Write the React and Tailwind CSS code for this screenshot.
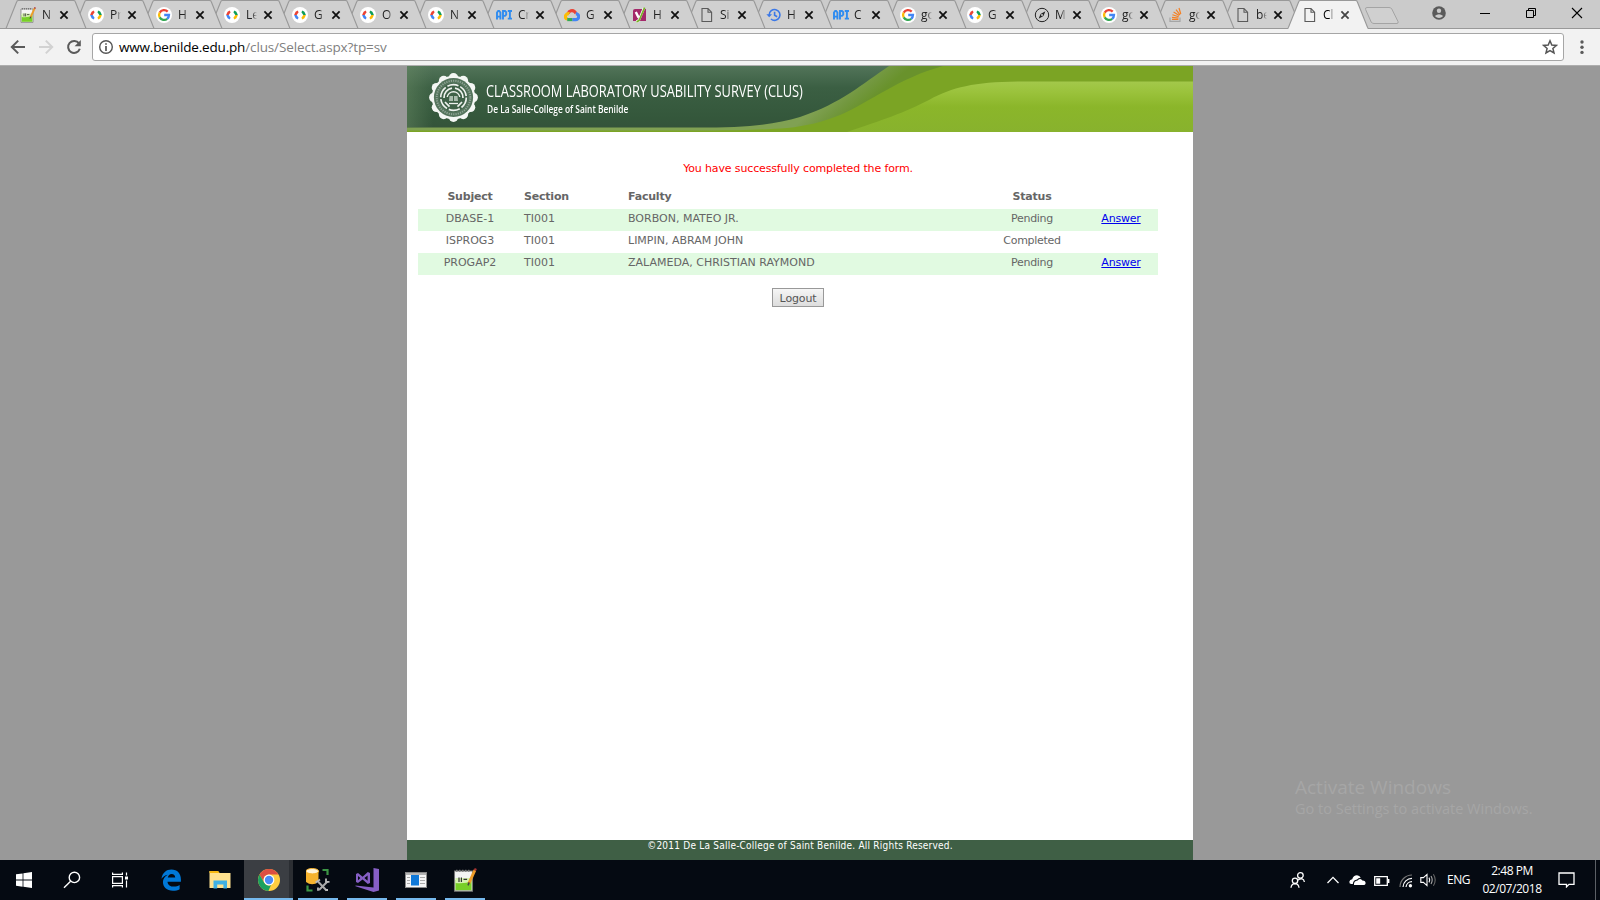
import React from "react";

const CodeIcon = () => (
  <svg viewBox="0 0 16 16" className="h-4 w-4">
    <circle cx="8" cy="8" r="8" fill="#fff" />
    <path d="M5.6 3.6 L6.6 5.2 L4.7 8 H2.1 L3.6 4.8Z" fill="#ea4335" />
    <path d="M2.1 8 H4.7 L6.6 10.8 L5.6 12.4 L3.6 11.2Z" fill="#4285f4" />
    <path d="M10.4 3.6 L9.4 5.2 L11.3 8 H13.9 L12.4 4.8Z" fill="#0f9d58" />
    <path d="M13.9 8 H11.3 L9.4 10.8 L10.4 12.4 L12.4 11.2Z" fill="#fbbc05" />
  </svg>
);

const GoogleIcon = () => (
  <svg viewBox="0 0 16 16" className="h-4 w-4">
    <circle cx="8" cy="8" r="8" fill="#fff" />
    <g fill="none" strokeWidth="2.3">
      <path d="M11.7 4.6 A5 5 0 0 0 3.7 5.6" stroke="#ea4335" />
      <path d="M3.7 5.6 A5 5 0 0 0 3.7 10.4" stroke="#fbbc05" />
      <path d="M3.7 10.4 A5 5 0 0 0 11.2 11.8" stroke="#34a853" />
      <path d="M11.2 11.8 A5 5 0 0 0 13 8 H8.2" stroke="#4285f4" />
    </g>
  </svg>
);

const ApiIcon = () => (
  <svg viewBox="0 0 16 16" className="h-4 w-4" fill="none" stroke="#2f8cf0" strokeWidth="1.9">
    <path d="M1 12.5 V5.5 L2.2 4 H3.2 L4.4 5.5 V12.5 M1 9.6 H4.4 M7 12.5 V4 H9 L10.2 5.2 V7.6 L9 8.9 H7 M11.8 4 H16 M11.8 11.6 H16 M13.9 4 V11.6" />
  </svg>
);

const CloudIcon = () => (
  <svg viewBox="0 0 16 16" className="h-4 w-4" fill="none" strokeWidth="3.1">
    <path d="M4.2 6.4 A4 4 0 0 1 10.6 4.6 L12 6.2" stroke="#ea4335" />
    <path d="M5.4 6.8 A3 3 0 0 0 2 11.4 L3.4 12" stroke="#fbbc05" />
    <path d="M3.2 12.6 H8.6" stroke="#34a853" />
    <path d="M8.4 12.6 H11.6 A2.8 2.8 0 0 0 11.8 6.6" stroke="#4285f4" />
  </svg>
);

const YoastIcon = () => (
  <svg viewBox="0 0 16 16" className="h-4 w-4">
    <path d="M3 2 H10 L14 2 V14 H1 V4 Q1 2 3 2Z" fill="#a4286a" />
    <path d="M3.8 5 L6.6 10.6 M12 1 L7.4 12 Q6.6 14.4 4 14.4" fill="none" stroke="#fff" strokeWidth="2.4" />
    <path d="M12.6 0.6 L7.8 12 Q6.8 14.6 4.4 14.6" fill="none" stroke="#77b227" strokeWidth="1.7" />
  </svg>
);

const FileIcon = () => (
  <svg viewBox="0 0 16 16" className="h-4 w-4" fill="none" stroke="#5a5a5a" strokeWidth="1.1">
    <path d="M3 1.5 H9 L12.6 5.2 V14.5 H3 Z M9 1.5 V5.2 H12.6" />
  </svg>
);

const HistoryIcon = () => (
  <svg viewBox="0 0 16 16" className="h-4 w-4" fill="none" stroke="#3b78e7" strokeWidth="1.6">
    <path d="M3.2 8 A5.4 5.4 0 1 1 5 12 M8.6 4.8 V8.3 L11.2 9.8" />
    <path d="M0.4 7.2 H6 L3.2 10.2Z" fill="#3b78e7" stroke="none" />
  </svg>
);

const CompassIcon = () => (
  <svg viewBox="0 0 16 16" className="h-4 w-4" fill="none" stroke="#222" strokeWidth="1">
    <circle cx="8" cy="8" r="6.7" />
    <path d="M11.4 4.2 L9.4 9 L4.6 11.8 L6.6 7Z" fill="#222" stroke="none" />
    <circle cx="8" cy="8" r="1" fill="#ccc" stroke="none" />
  </svg>
);

const StackIcon = () => (
  <svg viewBox="0 0 16 16" className="h-4 w-4" fill="none">
    <path d="M2 10.5 V14.4 H12 V10.5" stroke="#a5a5a5" strokeWidth="1.2" />
    <path d="M4 12.4 H10.4 M4 10.4 L10.5 11 M4.4 7.8 L10.7 9.7 M5.6 5 L11.2 8.5 M8 2.6 L12 7.8 M11 1 L12.8 7" stroke="#f48024" strokeWidth="1.2" />
  </svg>
);

const NotepadIcon = ({ className = "h-4 w-4" }) => (
  <svg viewBox="0 0 16 16" className={className}>
    <path d="M1 2 H13 V15.4 H1Z" fill="#f4f4f4" stroke="#777" strokeWidth="0.7" />
    <path d="M1.6 8 H12.4 V14.8 H1.6Z" fill="#78cf28" />
    <path d="M1.6 8 V10 Q8 10.8 12.4 8.6 V6.6 H1.6Z" fill="#d6f2b0" />
    <path d="M2 1.8 H12" stroke="#777" strokeWidth="1.4" strokeDasharray="1 1" />
    <path d="M4 6.4 V9.4 M5.6 6.4 V9.4 M7 7.6 H9.4" stroke="#333" strokeWidth="0.8" />
    <path d="M14.6 1.4 L10.6 10.2" stroke="#ed9c28" strokeWidth="1.9" />
    <path d="M14.2 0.7 L15.6 1.4" stroke="#a33" strokeWidth="1.5" />
    <path d="M10.8 9.6 L10 11.6" stroke="#444" strokeWidth="1" />
  </svg>
);

const tabs = [
  [NotepadIcon, "N"], [CodeIcon, "Pr"], [GoogleIcon, "H"], [CodeIcon, "Le"], [CodeIcon, "G"],
  [CodeIcon, "O"], [CodeIcon, "N"], [ApiIcon, "Cr"], [CloudIcon, "G"], [YoastIcon, "H"],
  [FileIcon, "Si"], [HistoryIcon, "H"], [ApiIcon, "C"], [GoogleIcon, "go"], [CodeIcon, "G"],
  [CompassIcon, "M"], [GoogleIcon, "go"], [StackIcon, "go"], [FileIcon, "be"], [FileIcon, "Cl"],
];

function Tab({ Icon, label, index }) {
  const active = index === tabs.length - 1;
  const wide = index < 9;
  return (
    <div
      className={`relative h-[29px] shrink-0 ${wide ? "w-[68px]" : "w-[67px]"}`}
      style={{ zIndex: active ? 50 : 40 - index }}
    >
      <svg className="absolute left-0 top-0 overflow-visible" width="80" height="29" viewBox="0 0 80 29">
        <path
          d="M0 28.5 L10.6 2 Q11 0.5 12.5 0.5 H67.5 Q69 0.5 69.4 2 L80 28.5"
          fill={active ? "#f2f2f2" : "#d0d0d0"}
          stroke="#999"
          strokeWidth="1.1"
        />
        {active ? <path d="M0.6 28.5 H79.4" stroke="#f2f2f2" strokeWidth="1.4" /> : <path d="M0 28.5 H80" stroke="#999" />}
      </svg>
      <div className="relative flex h-[29px] items-center pl-[14px]">
        <Icon />
        <span
          className={`w-[11px] overflow-hidden whitespace-nowrap font-['Open_Sans',sans-serif] text-[12px] leading-4 ${
            wide ? "ml-[6px]" : "ml-[5px]"
          } ${active ? "text-black" : "text-[#222]"} [mask-image:linear-gradient(to_right,black_55%,transparent)]`}
        >
          {label}
        </span>
        <svg className="ml-[6px]" width="10" height="10" viewBox="0 0 10 10">
          <path d="M1.4 1.4 L8.6 8.6 M8.6 1.4 L1.4 8.6" stroke={active ? "#444" : "#111"} strokeWidth="1.8" />
        </svg>
      </div>
    </div>
  );
}

function TabStrip() {
  return (
    <div className="flex h-[29px] items-stretch border-b border-[#999] bg-[#cbcbcb] pl-[6px]">
      {tabs.map(([Icon, label], i) => (
        <Tab key={i} Icon={Icon} label={label} index={i} />
      ))}
      <svg className="ml-[9px] mt-[6px] shrink-0" width="36" height="19" viewBox="0 0 36 19">
        <path d="M3 1.5 H25 Q27 1.5 27.8 3 L34 15.5 Q34.6 17.5 33 17.5 H10 Q8 17.5 7.2 16 L1.6 3.5 Q1 1.5 3 1.5Z" fill="#d0d0d0" stroke="#a4a4a4" />
      </svg>
      <div className="flex flex-1 items-start pl-[31px] pt-[5px]">
        <svg width="16" height="16" viewBox="0 0 16 16">
          <circle cx="8" cy="8" r="6.8" fill="#5a5a5a" />
          <circle cx="8" cy="5.8" r="2.2" fill="#cbcbcb" />
          <path d="M3.8 11 Q8 7.6 12.2 11 Q8 15 3.8 11Z" fill="#cbcbcb" />
        </svg>
        <svg className="ml-[32px]" width="12" height="16" viewBox="0 0 12 16">
          <path d="M1 8.5 H11" stroke="#000" />
        </svg>
        <svg className="ml-[34px]" width="12" height="16" viewBox="0 0 12 16" fill="none" stroke="#000">
          <path d="M1.5 5.5 H8.5 V12.5 H1.5Z M3.5 5.5 V3.5 H10.5 V10.5 H8.5" />
        </svg>
        <svg className="ml-[34px]" width="12" height="16" viewBox="0 0 12 16">
          <path d="M1 3 L11 13 M11 3 L1 13" stroke="#000" strokeWidth="1.1" />
        </svg>
      </div>
    </div>
  );
}

function Toolbar() {
  return (
    <div className="flex h-[37px] items-start border-b border-[#aeaeae] bg-[#f2f2f2] pl-[10px] pt-[4px]">
      <svg className="mt-[6px]" width="16" height="16" viewBox="0 0 16 16" fill="none" stroke="#5a5a5a" strokeWidth="2">
        <path d="M15 8 H2.5 M8.2 1.6 L1.8 8 L8.2 14.4" />
      </svg>
      <svg className="ml-[12px] mt-[6px]" width="16" height="16" viewBox="0 0 16 16" fill="none" stroke="#d2d2d2" strokeWidth="2">
        <path d="M1 8 H13.5 M7.8 1.6 L14.2 8 L7.8 14.4" />
      </svg>
      <svg className="ml-[12px] mt-[6px]" width="16" height="16" viewBox="0 0 16 16">
        <path d="M13 4.4 A6 6 0 1 0 13.8 9.8" fill="none" stroke="#5a5a5a" strokeWidth="2" />
        <path d="M14.8 1 V7.2 H8.6Z" fill="#5a5a5a" />
      </svg>
      <div className="ml-[10px] flex h-[28px] w-[1472px] items-center rounded-[3px] border border-[#a6a6a6] bg-white pl-[5px] pr-[5px]">
        <svg width="16" height="16" viewBox="0 0 16 16">
          <circle cx="8" cy="8" r="6.3" fill="none" stroke="#555" strokeWidth="1.4" />
          <path d="M8 7 V12 M8 4.2 V5.8" stroke="#555" strokeWidth="1.7" />
        </svg>
        <span className="ml-[5px] flex-1 whitespace-nowrap font-['Open_Sans',sans-serif] text-[13.5px] leading-5 tracking-[-0.13px] text-[#808080]">
          <span className="tracking-[-0.18px] text-black">www.benilde.edu.ph</span>/clus/Select.aspx?tp=sv
        </span>
        <svg width="16" height="16" viewBox="0 0 16 16">
          <path d="M8 1.8 L9.8 6 L14.4 6.4 L10.9 9.4 L12 13.9 L8 11.5 L4 13.9 L5.1 9.4 L1.6 6.4 L6.2 6Z" fill="none" stroke="#555" strokeWidth="1.5" />
        </svg>
      </div>
      <svg className="ml-[15px] mt-[6px]" width="6" height="16" viewBox="0 0 6 16" fill="#5a5a5a">
        <circle cx="3" cy="3" r="1.7" />
        <circle cx="3" cy="8.2" r="1.7" />
        <circle cx="3" cy="13.4" r="1.7" />
      </svg>
    </div>
  );
}

const scallops = Array.from({ length: 12 }, (_, i) => {
  const a = (i * Math.PI) / 6;
  return [24.5 + 19.6 * Math.cos(a), 24.5 + 19.6 * Math.sin(a)];
});

function Seal() {
  return (
    <svg width="49" height="49" viewBox="0 0 49 49" className="relative">
      <circle cx="24.5" cy="24.5" r="21.8" fill="#f4f7f4" />
      {scallops.map(([x, y], i) => (
        <circle key={i} cx={x} cy={y} r="4.8" fill="#f4f7f4" />
      ))}
      <circle cx="24.5" cy="24.5" r="19.6" fill="#54745c" />
      <circle cx="24.5" cy="24.5" r="16.8" fill="none" stroke="#8fa595" strokeWidth="2" strokeDasharray="1.2 1.1" />
      <circle cx="24.5" cy="24.5" r="14.2" fill="#3f6148" />
      <g fill="none" stroke="#eef2ee">
        <circle cx="24.5" cy="24.5" r="12.8" strokeWidth="1.7" strokeDasharray="11.4 2" />
        <path d="M15 25 A9.5 9.5 0 0 1 23 15.2 M26 15.2 A9.5 9.5 0 0 1 34 25 M33 29 L28.5 33.6 M16 29 L20.5 33.6" strokeWidth="1.7" />
        <path d="M18.2 24 A6.4 6.4 0 0 1 30.8 24" strokeWidth="1.4" />
        <path d="M20 30.5 H29" strokeWidth="1.3" />
      </g>
      <path d="M20.5 23 H24 V28 H20Z M25 23 H28.5 L29 28 H25Z" fill="#a9bbad" />
    </svg>
  );
}

function Banner() {
  return (
    <div className="relative flex h-[66px] shrink-0 items-start overflow-hidden pl-[22px] pt-[7px]">
      <svg className="absolute left-0 top-0" width="786" height="66" viewBox="0 0 786 66">
        <defs>
          <linearGradient id="dark" x1="0" y1="0" x2="0" y2="1">
            <stop offset="0" stopColor="#527459" />
            <stop offset="0.35" stopColor="#3b5f43" />
            <stop offset="0.85" stopColor="#34573b" />
            <stop offset="1" stopColor="#34533a" />
          </linearGradient>
          <linearGradient id="edge" x1="0" y1="0" x2="1" y2="0">
            <stop offset="0" stopColor="#6b8c66" stopOpacity="0.45" />
            <stop offset="1" stopColor="#6b8c66" stopOpacity="0" />
          </linearGradient>
          <linearGradient id="olive" gradientUnits="userSpaceOnUse" x1="436" y1="20" x2="454" y2="42">
            <stop offset="0" stopColor="#80a153" />
            <stop offset="0.5" stopColor="#739840" />
            <stop offset="1" stopColor="#69922c" />
          </linearGradient>
          <linearGradient id="lime" x1="0" y1="0" x2="0" y2="1">
            <stop offset="0" stopColor="#a3c84b" />
            <stop offset="0.22" stopColor="#9ac23b" />
            <stop offset="0.5" stopColor="#8bb62a" />
            <stop offset="1" stopColor="#88b22d" />
          </linearGradient>
        </defs>
        <rect width="786" height="66" fill="#7ba424" />
        <path d="M0 0 H536 C492 12 463 36 433 49 C415 56 400 60 380 62 C350 64 330 64.5 300 64.5 H0Z" fill="url(#olive)" />
        <path d="M0 0 H482 C455 18 435 37 393 51 C366 59 338 61.5 290 61.5 H0Z" fill="url(#dark)" />
        <rect width="26" height="61.5" fill="url(#edge)" />
        <path d="M440 66 C475 54 497 47 522 34 C548 20 570 15.5 623 15.5 H786 V66Z" fill="url(#lime)" />
      </svg>
      <Seal />
      <div className="relative ml-[8px] mt-[8px] text-white">
        <div className="w-max origin-left scale-x-[0.802] whitespace-nowrap font-['Open_Sans',sans-serif] text-[16px] leading-[20px]">
          CLASSROOM LABORATORY USABILITY SURVEY (CLUS)
        </div>
        <div className="ml-px w-max origin-left scale-x-[0.838] whitespace-nowrap font-['Open_Sans',sans-serif] text-[10px] font-semibold leading-[16px]">
          De La Salle-College of Saint Benilde
        </div>
      </div>
    </div>
  );
}

const rows = [
  ["DBASE-1", "TI001", "BORBON, MATEO JR.", "Pending"],
  ["ISPROG3", "TI001", "LIMPIN, ABRAM JOHN", "Completed"],
  ["PROGAP2", "TI001", "ZALAMEDA, CHRISTIAN RAYMOND", "Pending"],
];

const columns = "grid grid-cols-[104px_104px_354px_104px_74px]";

function Page() {
  return (
    <main className="flex min-h-0 flex-1 justify-center bg-[#999]">
      <div className="flex w-[786px] flex-col bg-white font-['DejaVu_Sans',sans-serif] text-[11px] text-[#666]">
        <Banner />
        <p className="mt-[29px] pr-[4px] text-center leading-4 tracking-[-0.14px] text-[#f00]">
          You have successfully completed the form.
        </p>
        <div className="ml-[11px] mt-[8px] w-[740px]">
          <div className={`${columns} h-[24px] pt-[4px] font-bold leading-4 tracking-[-0.2px]`}>
            <span className="text-center">Subject</span>
            <span className="pl-[2px]">Section</span>
            <span className="pl-[2px]">Faculty</span>
            <span className="text-center">Status</span>
          </div>
          {rows.map(([subject, section, faculty, status], i) => (
            <div key={subject} className={`${columns} h-[22px] pt-[2px] leading-4 ${i % 2 === 0 ? "bg-[#e1fae1]" : ""}`}>
              <span className="text-center">{subject}</span>
              <span className="pl-[2px]">{section}</span>
              <span className="pl-[2px]">{faculty}</span>
              <span className="text-center tracking-[-0.3px]">{status}</span>
              {status === "Pending" && (
                <a href="#" className="text-center tracking-[-0.2px] text-[#0000ee] underline">
                  Answer
                </a>
              )}
            </div>
          ))}
        </div>
        <button className="ml-[365px] mt-[13px] h-[19px] w-[52px] border border-[#999] bg-gradient-to-b from-[#f6f6f6] to-[#dddddd] pt-[2px] leading-[15px] tracking-[-0.15px] text-[#555]">
          Logout
        </button>
        <footer className="mt-auto h-[20px] bg-[#3f5f45] text-center font-['DejaVu_Sans_Condensed','DejaVu_Sans',sans-serif] text-[10px] font-normal leading-[12px] tracking-[0.22px] text-white">
          ©2011 De La Salle-College of Saint Benilde. All Rights Reserved.
        </footer>
      </div>
    </main>
  );
}

const Windows = () => (
  <svg width="16" height="16" viewBox="0 0 16 16" fill="#fff">
    <path d="M0 2.3 L6.6 1.4 V7.6 H0Z M7.4 1.3 L16 0 V7.6 H7.4Z M0 8.4 H6.6 V14.7 L0 13.8Z M7.4 8.4 H16 V16 L7.4 14.8Z" />
  </svg>
);
const Search = () => (
  <svg width="18" height="18" viewBox="0 0 18 18" fill="none" stroke="#fff" strokeWidth="1.4">
    <circle cx="11.4" cy="6.4" r="5.2" />
    <path d="M7.6 10.2 L1 16.8" />
  </svg>
);
const TaskView = () => (
  <svg width="18" height="18" viewBox="0 0 18 18" fill="none" stroke="#fff" strokeWidth="1.2">
    <path d="M1.6 5.6 H11.4 V12.4 H1.6Z M1.6 1.5 V3.4 H11.4 V1.5 M1.6 16.5 V14.6 H11.4 V16.5 M15.5 1.5 V4.4 M15.5 9.5 V16.5" />
    <path d="M14 5.5 H17 V8.5 H14Z" fill="#fff" stroke="none" />
  </svg>
);
const Edge = () => (
  <svg width="22" height="22" viewBox="0 0 24 24" fill="#0078d7">
    <path d="M1.6 10.7 C2.5 4.2 7 0.6 12.4 0.6 C19 0.6 22.8 5.2 22.8 11.2 V13.8 H8.2 C8.4 17.6 11.6 19.2 15 19.2 C17.6 19.2 19.7 18.5 21.4 17.4 V22 C19.5 23.1 16.9 23.7 14 23.7 C7.5 23.7 3.2 20 3.2 14.3 C3.2 10.9 5 7.9 8.4 6.2 C5.4 6.5 3.1 8.4 1.6 10.7 Z M8.5 9.4 H16.6 C16.5 6.9 15.1 5.5 12.8 5.5 C10.4 5.5 8.9 7.1 8.5 9.4Z" />
  </svg>
);
const Folder = () => (
  <svg width="22" height="20" viewBox="0 0 22 20">
    <path d="M0.5 1 H9 L10.5 3 H21.5 V18 H0.5Z" fill="#ffe28f" />
    <path d="M0.5 1 H9 L10.5 3 H0.5Z" fill="#f7b912" />
    <path d="M4.5 18.6 V10.6 H18 V18.6 H14.4 V14.6 H8.2 V18.6Z" fill="#3fb1e4" />
  </svg>
);
const Chrome = () => (
  <svg width="22" height="22" viewBox="0 0 22 22">
    <circle cx="11" cy="11" r="11" fill="#ffcd41" />
    <path d="M1.5 5.5 A11 11 0 0 1 20.5 5.5 H11 A5.5 5.5 0 0 0 6.2 13.7Z" fill="#dd4f42" />
    <path d="M1.5 5.5 L6.2 13.7 A5.5 5.5 0 0 0 13 16.1 L10.4 22 A11 11 0 0 1 1.5 5.5Z" fill="#1aa15f" />
    <circle cx="11" cy="11" r="5.4" fill="#fff" />
    <circle cx="11" cy="11" r="4.2" fill="#4b8bf5" />
  </svg>
);
const Database = () => (
  <svg width="24" height="24" viewBox="0 0 24 24">
    <path d="M0 3 V14 Q6 18.5 12.5 14 V3Z" fill="#f6b32e" />
    <ellipse cx="6.3" cy="3.2" rx="6.3" ry="2.7" fill="#fff4d9" stroke="#f6b32e" />
    <path d="M16.5 2 H21.5 V7 M1.5 17.5 V22.5 H6.5" fill="none" stroke="#3c9645" strokeWidth="2.2" />
    <path d="M11.5 13 L20.5 22.5 M21.5 13.5 L13 22" stroke="#050a12" strokeWidth="4" />
    <path d="M11.5 13 L20.5 22.5 M21.5 13.5 L13 22" stroke="#aaa" strokeWidth="2" />
    <path d="M9.6 14.6 L14 11.4 M20 10.5 V13.8 H23.5 M12 19.6 V22.8 M19.5 22 H22" stroke="#bbb" strokeWidth="1.8" fill="none" />
  </svg>
);
const VisualStudio = () => (
  <svg width="24" height="24" viewBox="0 0 24 24" fill="#865fc5">
    <path d="M18.5 0 L24 1 V22.6 L18.5 24 L0.5 18.2 V17.6 L18.5 19.6Z" />
    <path fillRule="evenodd" d="M1 6 L3 5 L7.6 8.8 L12.8 4 L15 5 V15 L12.8 16 L7.6 11.4 L3 15 L1 14Z M3 8 V12.2 L5.4 10.1Z M12.6 7.6 L9.4 10.1 L12.6 12.7Z" />
  </svg>
);
const AppWindow = () => (
  <svg width="22" height="16" viewBox="0 0 22 16">
    <rect x="0.5" y="0.5" width="21" height="15" fill="#f5f5f5" stroke="#888" />
    <path d="M1 2 H21" stroke="#999" strokeWidth="1.4" />
    <rect x="6" y="3" width="8" height="10.5" fill="#0f78d8" />
    <path d="M2 5.5 H5 M2 8.5 H5 M2 11.5 H5 M15 5.5 H20 M15 8.5 H20 M15 11.5 H20" stroke="#aaa" />
  </svg>
);
const NotepadLarge = () => <NotepadIcon className="h-[24px] w-[24px]" />;

const apps = [
  [Edge, ""],
  [Folder, ""],
  [Chrome, "active"],
  [Database, "open"],
  [VisualStudio, "open"],
  [AppWindow, "open"],
  [NotepadLarge, "open"],
];

function Taskbar() {
  return (
    <div className="flex h-[40px] shrink-0 bg-[#050a12]">
      {[Windows, Search, TaskView].map((Icon, i) => (
        <div key={i} className="flex w-[48px] items-center justify-center">
          <Icon />
        </div>
      ))}
      <div className="ml-[2px] flex">
        {apps.map(([Icon, state], i) => (
          <div key={i} className="flex w-[49px] flex-col items-center">
            <div
              className={`flex h-[38px] items-center justify-center pt-[2px] ${
                state === "active" ? "w-full border-r-4 border-[#2b2e33] bg-[#3b3e43] pl-[5px]" : "w-[40px]"
              }`}
            >
              <Icon />
            </div>
            <div className={`h-[2px] ${state === "active" ? "w-full bg-[#76b9ed]" : state ? "w-[40px] bg-[#76b9ed]" : ""}`} />
          </div>
        ))}
      </div>
      <div className="ml-auto flex items-center font-['Open_Sans',sans-serif] text-[12px] text-white">
        <svg width="16" height="18" viewBox="0 0 16 18" fill="none" stroke="#fff" strokeWidth="1.3">
          <circle cx="10.4" cy="4.4" r="2.8" />
          <path d="M7.5 9.2 Q13.5 5.6 14.4 11" />
          <circle cx="5" cy="9.8" r="2.7" />
          <path d="M1 16.8 Q1.4 12.8 5 12.7 Q8.6 12.8 9 16.8" />
        </svg>
        <svg className="ml-[20px]" width="14" height="10" viewBox="0 0 14 10" fill="none" stroke="#fff" strokeWidth="1.3">
          <path d="M1.5 8 L7 2.4 L12.5 8" />
        </svg>
        <svg className="ml-[9px]" width="17" height="12" viewBox="0 0 17 12" fill="#fff">
          <path d="M5 11 Q4.6 7 8.6 6.6 Q10.6 3.4 13.4 6.4 Q16.8 6.6 16.6 9.4 Q16.2 11 14.8 11Z" />
          <path d="M3.8 10 H2 Q0 9.6 0.4 7.4 Q0.8 5.4 3.2 5.2 Q4.4 1.4 8 1.2 Q10.6 1.2 11.8 3.8 Q9.4 3.6 8 5.6 Q4.2 6 3.8 10Z" />
        </svg>
        <svg className="ml-[8px] mt-[1px]" width="16" height="10" viewBox="0 0 16 10">
          <path d="M0.7 0.7 H13.3 V9.3 H0.7Z" fill="none" stroke="#fff" strokeWidth="1.3" />
          <path d="M2.2 2.2 H6.2 V7.8 H2.2Z M14 3 H15.4 V7 H14Z" fill="#fff" />
        </svg>
        <svg className="ml-[9px] mt-[2px]" width="14" height="14" viewBox="0 0 14 14" fill="none" strokeWidth="1.2">
          <path d="M1 13 A12 12 0 0 1 13 1" stroke="#777" />
          <path d="M4 13 A9 9 0 0 1 13 4.4 M7 13 A6 6 0 0 1 13 7.6" stroke="#fff" />
          <circle cx="11.4" cy="11.8" r="1.7" fill="#fff" />
        </svg>
        <svg className="ml-[7px]" width="17" height="14" viewBox="0 0 17 14" fill="none" stroke="#fff" strokeWidth="1.1">
          <path d="M0.8 4.6 H3.4 L7 1.4 V12.6 L3.4 9.4 H0.8Z M9 4.6 Q10.4 7 9 9.4" />
          <path d="M11 3 Q13.4 7 11 11" stroke="#aaa" />
          <path d="M13.4 1.2 Q17 7 13.4 12.8" stroke="#666" />
        </svg>
        <span className="ml-[10px] w-[24px] whitespace-nowrap tracking-[-0.5px]">ENG</span>
        <div className="ml-[8px] w-[66px] whitespace-nowrap text-center leading-[18px] tracking-[-0.45px]">
          <div>2:48 PM</div>
          <div>02/07/2018</div>
        </div>
        <svg className="ml-[13px]" width="17" height="16" viewBox="0 0 17 16" fill="none" stroke="#fff" strokeWidth="1.3">
          <path d="M1 1 H16 V12.4 H11 L8.5 14.9 V12.4 H1Z" />
        </svg>
        <div className="ml-[20px] mr-[4px] h-[40px] w-px bg-[#5c6066]" />
      </div>
    </div>
  );
}

export default function App() {
  return (
    <div className="relative flex h-[900px] w-[1600px] flex-col overflow-hidden">
      <TabStrip />
      <Toolbar />
      <Page />
      <Taskbar />
      <div className="absolute left-[1295px] top-[774px] whitespace-nowrap font-['Open_Sans',sans-serif] text-[#a6a6a6]">
        <div className="text-[19px] leading-[26px]">Activate Windows</div>
        <div className="text-[14.5px] leading-[18px]">Go to Settings to activate Windows.</div>
      </div>
    </div>
  );
}
